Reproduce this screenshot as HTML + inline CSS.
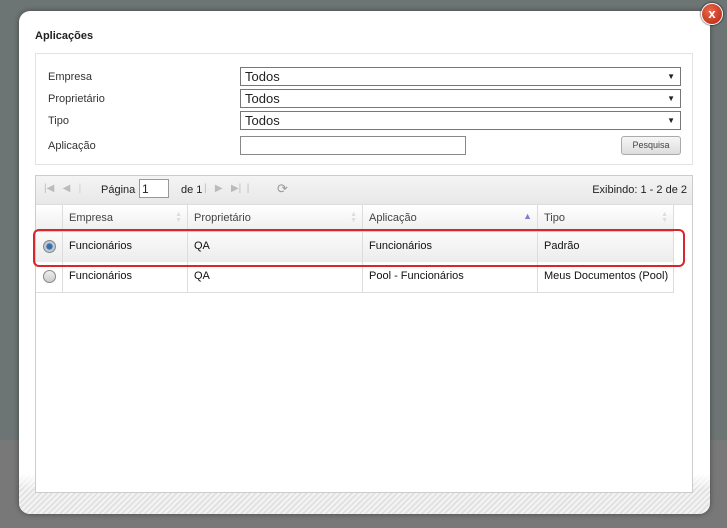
<!DOCTYPE html>
<html><head><meta charset="utf-8"><style>
body{margin:0;width:727px;height:528px;overflow:hidden;background:#747777;font-family:"Liberation Sans",sans-serif;position:relative}
.bg1{position:absolute;left:0;top:0;width:727px;height:440px;background:#6d7474}
.bg2{position:absolute;left:0;top:440px;width:727px;height:88px;background:#787878}
.modal{position:absolute;left:19px;top:11px;width:691px;height:503px;background:#fff;border-radius:11px;box-shadow:0 0 6px rgba(0,0,0,.4);overflow:hidden}
.foot{position:absolute;left:0;bottom:0;width:100%;height:40px;background:linear-gradient(rgba(255,255,255,1),rgba(255,255,255,0) 40%),repeating-linear-gradient(135deg,#e2e2e2 0 2px,#f4f4f4 2px 4px)}
.close{position:absolute;left:701px;top:3px;width:20px;height:20px;border-radius:50%;background:radial-gradient(circle at 40% 35%,#e86a4a,#b82010);border:1px solid #fff;color:#fff;font:bold 13px "Liberation Sans";text-align:center;line-height:19px;box-shadow:0 0 2px #000}
.t{position:absolute;left:16px;top:19px;font-size:11px;font-weight:bold;color:#222}
.filt{position:absolute;left:16px;top:42px;width:656px;height:110px;border:1px solid #e3e3e3}
.lab{position:absolute;left:12px;font-size:11px;color:#333}
.sel{position:absolute;left:204px;border:1px solid #777;font-size:13px;color:#222;line-height:17px;padding-left:4px;box-sizing:border-box;width:441px;height:19px}
.sel:after{content:"▼";position:absolute;right:5px;top:0;font-size:8px}
.inp{position:absolute;left:204px;top:82px;width:224px;height:17px;border:1px solid #888}
.btn{position:absolute;left:585px;top:82px;width:58px;height:17px;border:1px solid #aaa;border-radius:3px;background:linear-gradient(#f6f6f6,#ddd);font-size:9px;color:#444;text-align:center;line-height:17px}
.grid{position:absolute;left:16px;top:164px;width:656px;height:316px;border:1px solid #ccc;background:#fff;z-index:1}
.tb{position:absolute;left:0;top:0;width:100%;height:28px;background:linear-gradient(#f4f4f4,#e8e8e8);border-bottom:1px solid #ddd;font-size:11px;color:#222}
.hd{position:absolute;top:29px;left:0;width:638px;height:26px;background:linear-gradient(#fff,#efefef);border-bottom:1px solid #ccc;font-size:11px;color:#444}
.c{position:absolute;top:0;height:100%;border-right:1px solid #ddd;box-sizing:border-box;padding-left:6px;line-height:26px}
.s{position:absolute;right:5px;top:0;color:#ddd;font-size:7px;line-height:6px;padding-top:7px}
.row{position:absolute;left:0;width:638px;height:30px;font-size:11px;color:#111;border-bottom:1px solid #ddd;background:linear-gradient(#fbfbfb,#ececec)}
.row .c{line-height:29px}
.rad{position:absolute;left:7px;top:8px;width:11px;height:11px;border-radius:50%;border:1px solid #888;background:linear-gradient(#eee,#ccc)}
.hl{position:absolute;left:14px;top:218px;width:648px;height:34px;border:2px solid #d8262c;border-radius:6px;z-index:2}
</style></head><body>
<div class="bg1"></div><div class="bg2"></div>
<div class="modal">
<div class="foot"></div>
<div class="t">Aplicações</div>
<div class="filt">
<div class="lab" style="top:17px">Empresa</div><div class="sel" style="top:13px">Todos</div>
<div class="lab" style="top:39px">Proprietário</div><div class="sel" style="top:35px">Todos</div>
<div class="lab" style="top:61px">Tipo</div><div class="sel" style="top:57px">Todos</div>
<div class="lab" style="top:86px">Aplicação</div><div class="inp"></div><div class="btn">Pesquisa</div>
</div>
<div class="grid">
<div class="tb">
<span style="position:absolute;left:8px;top:7px;color:#bbb;font-size:10px">|◀ &nbsp; ◀ &nbsp;&nbsp;<span style="color:#ccc">|</span></span>
<span style="position:absolute;left:65px;top:8px">Página</span>
<span style="position:absolute;left:103px;top:3px;width:30px;height:19px;border:1px solid #999;background:#fff;line-height:19px;font-size:12px;box-sizing:border-box;padding-left:2px">1</span>
<span style="position:absolute;left:145px;top:8px">de 1</span>
<span style="position:absolute;left:168px;top:7px;color:#bbb;font-size:10px">| &nbsp; ▶ &nbsp; ▶| &nbsp;|</span>
<span style="position:absolute;left:241px;top:5px;color:#999;font-size:13px">⟳</span>
<span style="position:absolute;right:5px;top:8px">Exibindo: 1 - 2 de 2</span>
</div>
<div class="hd">
<div class="c" style="left:0;width:27px"></div>
<div class="c" style="left:27px;width:125px">Empresa<span class="s">▲<br>▼</span></div>
<div class="c" style="left:152px;width:175px">Proprietário<span class="s">▲<br>▼</span></div>
<div class="c" style="left:327px;width:175px">Aplicação<span style="position:absolute;right:5px;color:#7b7fd6;font-size:9px;top:-2px">▲</span></div>
<div class="c" style="left:502px;width:136px">Tipo<span class="s">▲<br>▼</span></div>
</div>
<div class="row" style="top:56px">
<div class="c" style="left:0;width:27px"><div class="rad" style="background:radial-gradient(circle,#3b6ea8 35%,#bcc8d6 45%);"></div></div>
<div class="c" style="left:27px;width:125px">Funcionários</div>
<div class="c" style="left:152px;width:175px">QA</div>
<div class="c" style="left:327px;width:175px">Funcionários</div>
<div class="c" style="left:502px;width:136px">Padrão</div>
</div>
<div class="row" style="top:86px;background:#fff">
<div class="c" style="left:0;width:27px"><div class="rad"></div></div>
<div class="c" style="left:27px;width:125px">Funcionários</div>
<div class="c" style="left:152px;width:175px">QA</div>
<div class="c" style="left:327px;width:175px">Pool - Funcionários</div>
<div class="c" style="left:502px;width:136px">Meus Documentos (Pool)</div>
</div>
</div>
<div class="hl"></div>
</div>
<div class="close">x</div>
</body></html>
